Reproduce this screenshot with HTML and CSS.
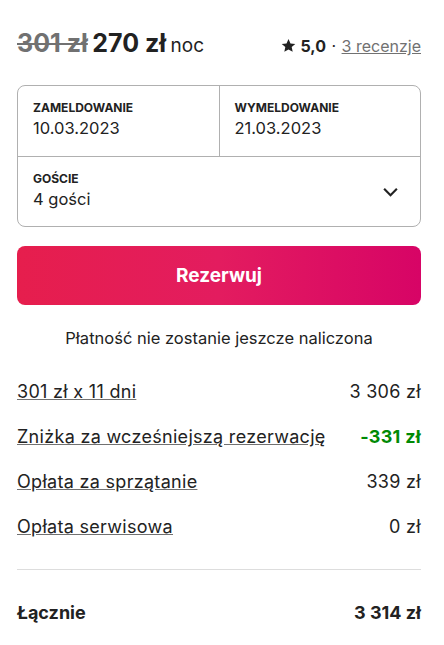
FILE: index.html
```html
<!DOCTYPE html>
<html lang="pl">
<head>
  <meta charset="UTF-8" />
  <meta name="viewport" content="width=device-width, initial-scale=1.0"/>
  <title>Rezerwacja</title>
  <link rel="stylesheet" href="styles.css">
</head>
<body>
  <div class="booking">
    <div class="top">
      <div class="price">
        <span class="old">301 zł</span>
        <span class="now">270 zł</span>
        <span class="per">noc</span>
      </div>
      <div class="rating">
        <svg class="star" viewBox="0 0 24 24" width="15" height="15"><path d="M12 1.5l3.2 7.1 7.6.8-5.7 5.1 1.6 7.6L12 18.2l-6.7 3.9 1.6-7.6L1.2 9.4l7.6-.8z" fill="#222"/></svg>
        <b>5,0</b>
        <span class="dot">·</span>
        <a href="#">3 recenzje</a>
      </div>
    </div>

    <div class="picker">
      <div class="dates">
        <div class="cell">
          <div class="label">Zameldowanie</div>
          <div class="value">10.03.2023</div>
        </div>
        <div class="cell right">
          <div class="label">Wymeldowanie</div>
          <div class="value">21.03.2023</div>
        </div>
      </div>
      <div class="cell guests">
        <div>
          <div class="label">Goście</div>
          <div class="value">4 gości</div>
        </div>
        <svg viewBox="0 0 32 32" width="17" height="17"><path d="M4 11l12 12 12-12" fill="none" stroke="#222" stroke-width="4"/></svg>
      </div>
    </div>

    <button class="reserve">Rezerwuj</button>
    <p class="note">Płatność nie zostanie jeszcze naliczona</p>

    <div class="lines">
      <div class="line"><a href="#">301 zł x 11 dni</a><span>3 306 zł</span></div>
      <div class="line"><a href="#">Zniżka za wcześniejszą rezerwację</a><span class="discount">-331 zł</span></div>
      <div class="line"><a href="#">Opłata za sprzątanie</a><span>339 zł</span></div>
      <div class="line"><a href="#">Opłata serwisowa</a><span>0 zł</span></div>
    </div>

    <div class="total">
      <span>Łącznie</span>
      <span>3 314 zł</span>
    </div>
  </div>
</body>
</html>
```

FILE: styles.css
```css
body {
  margin: 0;
  font-family: Inter, "Noto Sans", sans-serif;
  color: #222;
  background: #fff;
}
.booking {
  width: 404px;
  margin-left: 17px;
  padding-top: 28px;
}
.top {
  display: flex;
  justify-content: space-between;
  align-items: baseline;
}
.price .old {
  font-size: 25px;
  font-weight: 700;
  color: #717171;
  text-decoration: line-through;
}
.price .now {
  font-size: 25px;
  font-weight: 700;
}
.price .per {
  font-size: 19px;
}
.rating {
  font-size: 16px;
}
.rating .star {
  vertical-align: -1px;
}
.rating .dot {
  margin: 0 1px;
}
.rating a {
  color: #717171;
  text-decoration: underline;
}
.picker {
  margin-top: 27px;
  border: 1px solid #b0b0b0;
  border-radius: 8px;
}
.dates {
  display: flex;
  border-bottom: 1px solid #b0b0b0;
}
.cell {
  flex: 1;
  padding: 14px 15px 15px;
}
.dates .cell {
  padding-bottom: 16px;
}
.cell.right {
  border-left: 1px solid #b0b0b0;
}
.label {
  font-size: 12px;
  font-weight: 700;
  text-transform: uppercase;
  line-height: 16px;
}
.value {
  font-size: 16.5px;
  line-height: 24px;
}
.guests {
  display: flex;
  justify-content: space-between;
  align-items: center;
  padding-right: 21px;
}
.reserve {
  display: block;
  width: 100%;
  height: 59px;
  margin-top: 19px;
  border: 0;
  border-radius: 8px;
  background: linear-gradient(to right, #e61e4d, #e31c5f 50%, #d70466);
  color: #fff;
  font-family: inherit;
  font-size: 19px;
  font-weight: 700;
}
.note {
  text-align: center;
  font-size: 16.5px;
  margin: 23px 0 0;
}
.lines {
  margin-top: 32px;
}
.line {
  display: flex;
  justify-content: space-between;
  font-size: 18px;
  letter-spacing: 0.3px;
  line-height: 24px;
  margin-bottom: 21px;
}
.line a {
  color: #222;
  text-decoration: underline;
  text-decoration-color: #717171;
}
.discount {
  color: #008a05;
  font-weight: 700;
}
.total {
  display: flex;
  justify-content: space-between;
  border-top: 1px solid #ddd;
  margin-top: 30px;
  padding-top: 32px;
  font-size: 18px;
  font-weight: 700;
}
```
